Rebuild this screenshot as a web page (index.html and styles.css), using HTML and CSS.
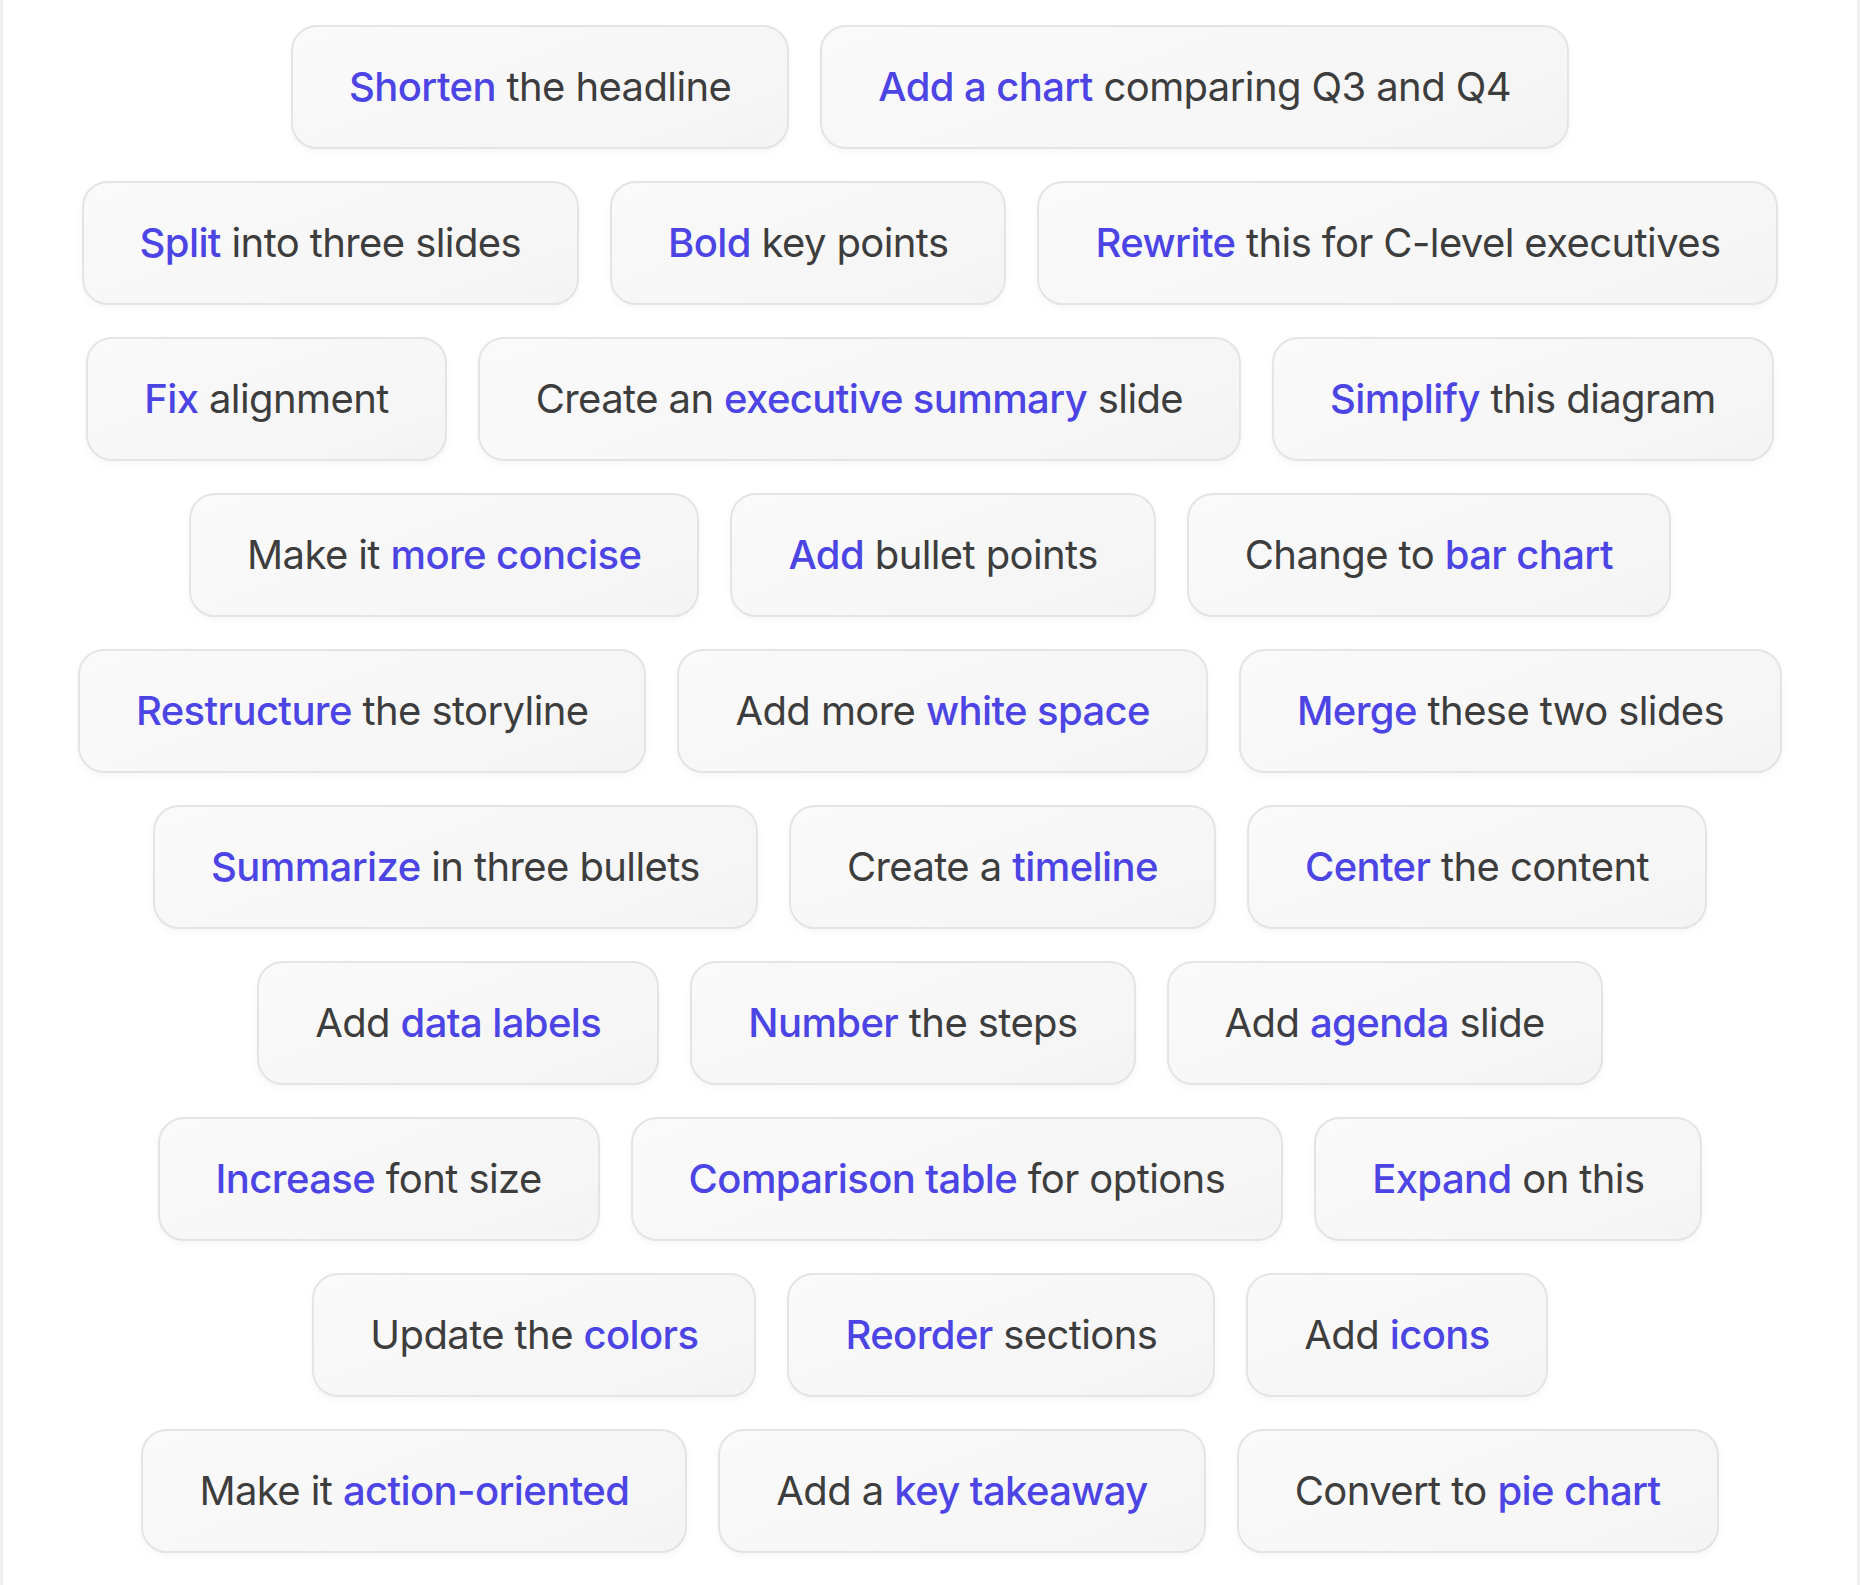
FILE: index.html
```html
<!DOCTYPE html>
<html lang="en">
<head>
<meta charset="utf-8">
<title>Suggestions</title>
<link rel="stylesheet" href="styles.css">
</head>
<body>
<main class="board">
  <div class="row">
    <button class="chip"><b>Shorten</b> the headline</button>
    <button class="chip"><b>Add a chart</b> comparing Q3 and Q4</button>
  </div>
  <div class="row">
    <button class="chip"><b>Split</b> into three slides</button>
    <button class="chip"><b>Bold</b> key points</button>
    <button class="chip"><b>Rewrite</b> this for C-level executives</button>
  </div>
  <div class="row">
    <button class="chip"><b>Fix</b> alignment</button>
    <button class="chip">Create an <b>executive summary</b> slide</button>
    <button class="chip"><b>Simplify</b> this diagram</button>
  </div>
  <div class="row">
    <button class="chip">Make it <b>more concise</b></button>
    <button class="chip"><b>Add</b> bullet points</button>
    <button class="chip">Change to <b>bar chart</b></button>
  </div>
  <div class="row">
    <button class="chip"><b>Restructure</b> the storyline</button>
    <button class="chip">Add more <b>white space</b></button>
    <button class="chip"><b>Merge</b> these two slides</button>
  </div>
  <div class="row">
    <button class="chip"><b>Summarize</b> in three bullets</button>
    <button class="chip">Create a <b>timeline</b></button>
    <button class="chip"><b>Center</b> the content</button>
  </div>
  <div class="row">
    <button class="chip">Add <b>data labels</b></button>
    <button class="chip"><b>Number</b> the steps</button>
    <button class="chip">Add <b>agenda</b> slide</button>
  </div>
  <div class="row">
    <button class="chip"><b>Increase</b> font size</button>
    <button class="chip"><b>Comparison table</b> for options</button>
    <button class="chip"><b>Expand</b> on this</button>
  </div>
  <div class="row">
    <button class="chip">Update the <b>colors</b></button>
    <button class="chip"><b>Reorder</b> sections</button>
    <button class="chip">Add <b>icons</b></button>
  </div>
  <div class="row">
    <button class="chip">Make it <b>action-oriented</b></button>
    <button class="chip">Add a <b>key takeaway</b></button>
    <button class="chip">Convert to <b>pie chart</b></button>
  </div>
</main>
</body>
</html>
```
FILE: styles.css
```css
html, body {
  margin: 0;
  padding: 0;
  background: #ffffff;
}

body {
  min-height: 1585px;
  box-sizing: border-box;
  border-left: 3px solid #efefef;
  border-right: 3px solid #efefef;
  font-family: Inter, "Noto Sans", "Liberation Sans", sans-serif;
}

.board {
  display: flex;
  flex-direction: column;
  gap: 32px;
  padding-top: 25px;
}

.row {
  display: flex;
  justify-content: center;
  gap: 31px;
}

.chip {
  font-family: inherit;
  font-size: 40px;
  line-height: 60px;
  font-weight: 400;
  color: #3d3d3d;
  letter-spacing: -0.6px;
  padding: 30px 56px;
  border: 2px solid #e4e4e4;
  border-radius: 26px;
  background: linear-gradient(160deg, #fafafa 0%, #f4f4f4 100%);
  box-shadow: 0 3px 7px rgba(0, 0, 0, 0.04);
  white-space: nowrap;
  cursor: pointer;
}

.chip b {
  font-weight: 500;
  color: #4c45e4;
}
```
